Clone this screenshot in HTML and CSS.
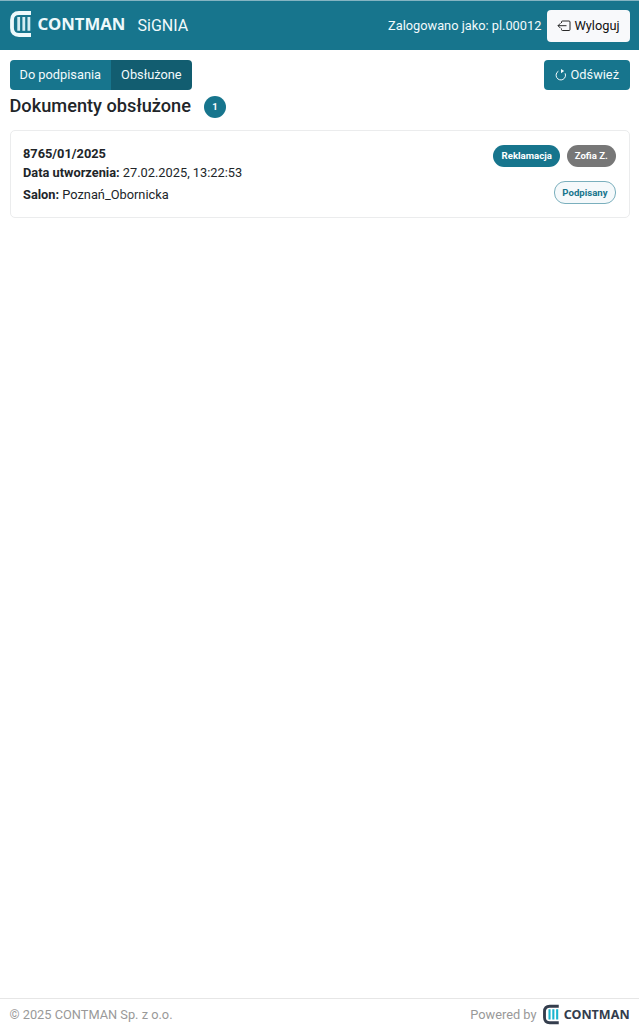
FILE: index.html
```html
<!DOCTYPE html>
<html lang="pl">
<head>
	<meta charset="utf-8">
	<title>SiGNIA</title>
	<link rel="stylesheet" href="styles.css">
</head>
<body>
	<header class="navbar">
		<div class="brand">
			<svg class="logo" width="116" height="28" viewBox="0 0 116 28">
				<path d="M21 3H9Q2 3 2 10V18Q2 25 9 25H21" fill="none" stroke="currentColor" stroke-width="3.8"/>
				<path class="bars" d="M8.700 7V20.800M13.800 7V20.800M18.900 7V20.800" fill="none" stroke-width="2.800"/>
				<text x="27.500" y="19.500" textLength="88" lengthAdjust="spacingAndGlyphs">CONTMAN</text>
			</svg>
			<span class="appName">SiGNIA</span>
		</div>
		<div class="user">
			<span class="userName">Zalogowano jako: pl.00012</span>
			<button class="btn btnLight" type="button">
				<svg class="icon" width="14" height="12" viewBox="0 0 14 12" fill="none" stroke="currentColor" stroke-width=".9">
					<path d="M4.500 3V2Q4.500 1 5.500 1H12Q13 1 13 2V9.500Q13 10.500 12 10.500H5.500Q4.500 10.500 4.500 9.500V8.500M9.500 5.700H1M3.500 3.200L1 5.700L3.500 8.200"/>
				</svg>
				<span>Wyloguj</span>
			</button>
		</div>
	</header>
	<main class="content">
		<div class="toolbar">
			<div class="tabs">
				<button class="btn tab" type="button">Do podpisania</button>
				<button class="btn tab active" type="button">Obsłużone</button>
			</div>
			<button class="btn btnRefresh" type="button">
				<svg class="icon" width="12" height="12" viewBox="0 0 12 12" fill="none" stroke="currentColor">
					<path d="M3.400 2.200A4.700 4.700 0 1 0 10.100 4.300"/>
					<path d="M6 0L9.200 2L6 4.200Z" fill="currentColor" stroke="none"/>
				</svg>
				<span>Odśwież</span>
			</button>
		</div>
		<div class="heading">
			<h1>Dokumenty obsłużone</h1>
			<span class="count">1</span>
		</div>
		<div class="card">
			<div class="cardInfo">
				<div><b>8765/01/2025</b></div>
				<div><b>Data utworzenia:</b> 27.02.2025, 13:22:53</div>
				<div class="salon"><b>Salon:</b> Poznań_Obornicka</div>
			</div>
			<div class="cardBadges">
				<div class="badgeRow">
					<span class="badge">Reklamacja</span>
					<span class="badge grey">Zofia Z.</span>
				</div>
				<span class="badge outline">Podpisany</span>
			</div>
		</div>
	</main>
	<footer class="footer">
		<span>© 2025 CONTMAN Sp. z o.o.</span>
		<div class="powered">
			<span>Powered by</span>
			<svg class="logo dark" width="87" height="21" viewBox="0 0 116 28">
				<path d="M21 3H9Q2 3 2 10V18Q2 25 9 25H21" fill="none" stroke="currentColor" stroke-width="3.800"/>
				<path class="bars" d="M8.700 7V20.800M13.800 7V20.800M18.900 7V20.800" fill="none" stroke-width="2.800"/>
				<text x="27.500" y="19.500" textLength="88" lengthAdjust="spacingAndGlyphs">CONTMAN</text>
			</svg>
		</div>
	</footer>
</body>
</html>
```
FILE: styles.css
```css
* {
	box-sizing: border-box;
}
body {
	margin: 0;
	min-height: 100vh;
	display: flex;
	flex-direction: column;
	background-color: white;
	color: #212529;
	font: 12.8px/19.2px Roboto, sans-serif;
}
.navbar {
	height: 50px;
	padding: 0 9.5px;
	display: flex;
	align-items: center;
	justify-content: space-between;
	border-top: 1px solid #84b4c2;
	background-color: #17758d;
	color: #f2fafc;
}
.brand, .user, .powered, .heading, .toolbar, .tabs, .badgeRow {
	display: flex;
	align-items: center;
}
.logo {
	display: block;
	overflow: visible;
	color: #edf9fb;
}
.brand .logo {
	margin-bottom: 3px;
}
.logo text {
	font: bold 16px "Noto Sans", sans-serif;
	fill: currentColor;
}
.logo .bars {
	stroke: #d5edf2;
}
.logo.dark {
	color: #343d4d;
}
.logo.dark .bars {
	stroke: #19b5cf;
}
.appName {
	margin-left: 12px;
	font-size: 16px;
}
.user {
	gap: 6px;
}
.btn {
	display: flex;
	align-items: center;
	gap: 3px;
	height: 30px;
	padding: 0 10px;
	border: 0 none;
	border-radius: 4px;
	background-color: #17758d;
	color: #f2fafc;
	font: inherit;
	white-space: nowrap;
	cursor: pointer;
}
.btnLight {
	height: 32px;
	background-color: #f8f9fb;
	color: #111;
}
.btnRefresh {
	padding: 0 10.5px;
	gap: 4px;
}
.icon {
	flex: none;
}
.content {
	flex: 1;
	padding: 10px 9.5px;
}
.toolbar {
	justify-content: space-between;
}
.tab:first-child {
	border-radius: 4px 0 0 4px;
}
.tab:last-child {
	border-radius: 0 4px 4px 0;
}
.tab.active {
	background-color: #125d70;
}
.heading {
	height: 32px;
	gap: 13px;
}
h1 {
	margin: 0;
	font-size: 18.2px;
	font-weight: 500;
}
.count {
	width: 22px;
	height: 22px;
	margin-top: 2px;
	border-radius: 50%;
	background-color: #17758d;
	color: white;
	font-size: 9.6px;
	font-weight: bold;
	line-height: 22px;
	text-align: center;
}
.card {
	display: flex;
	justify-content: space-between;
	height: 88px;
	margin-top: 8px;
	padding: 13px 12.5px;
	border: 1px solid #ebeced;
	border-radius: 5px;
}
.salon {
	margin-top: 3px;
}
.cardBadges {
	display: flex;
	flex-direction: column;
	align-items: flex-end;
	gap: 14px;
	padding-top: 1px;
}
.badgeRow {
	gap: 6.5px;
}
.badge {
	height: 22px;
	padding: 0 8.2px;
	border-radius: 11px;
	background-color: #17758d;
	color: white;
	font-size: 9.6px;
	font-weight: bold;
	line-height: 21px;
}
.badge.grey {
	background-color: #777;
}
.badge.outline {
	height: 23px;
	padding: 0 7.5px;
	border: 1px solid #7aafbd;
	background-color: #f5f9fb;
	color: #17758d;
}
.footer {
	height: 32px;
	padding: 0 9.5px;
	display: flex;
	align-items: center;
	justify-content: space-between;
	border-top: 1px solid #e6e6e6;
	color: #999;
}
.powered {
	gap: 6px;
}
```
